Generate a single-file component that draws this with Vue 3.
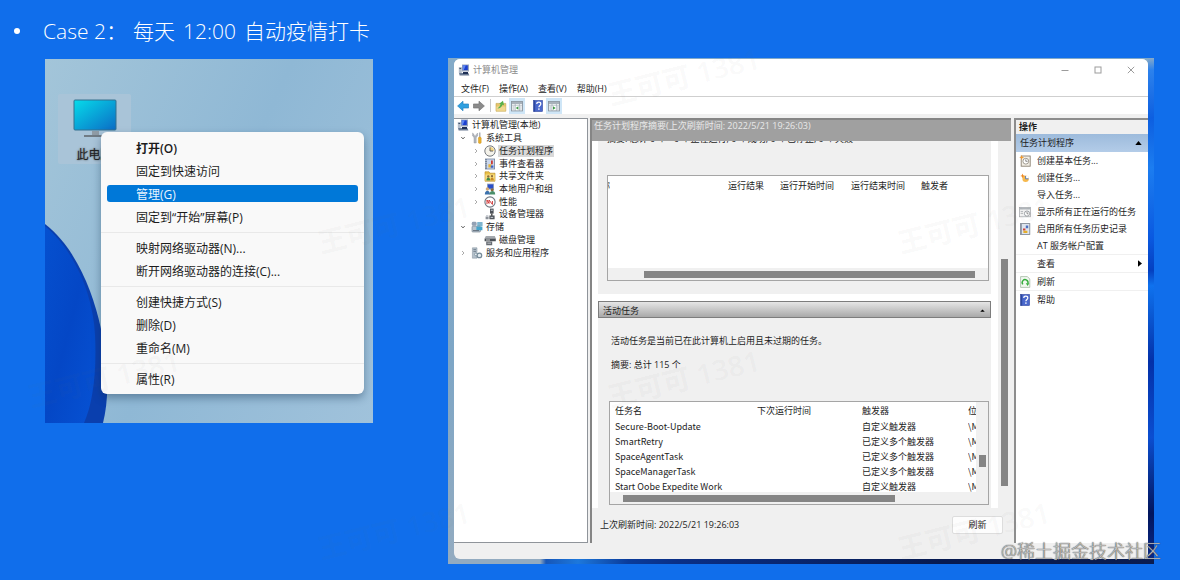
<script setup>
const icons = {
  computer: '<rect x="4" y="0.5" width="7" height="7" fill="#9aa6bd"/><rect x="4.8" y="1.3" width="5" height="4.8" fill="#1c3fd0"/><path d="M4.8 1.3h3l-2 4.8h-1z" fill="#5d86f0"/><rect x=".8" y="3" width="3" height="6" fill="#b4bdca"/><rect x="1.4" y="4" width="1.8" height="1" fill="#3f5068"/><path d="M1 9h9.4l1 2.5H1.6z" fill="#6b7b94"/><path d="M5 8h5v2H5z" fill="#1f2f55"/>',
  tools: '<path d="M1.6 1v3l1.4 1.4V11h2.2V5.4L6.6 4V1L5.3 2.4v1.4H3V2.4z" fill="#b4b9c0" stroke="#858b94" stroke-width=".4"/><path d="M8.2.6h1.2v5H8.2z" fill="#9a9ea5"/><rect x="7.4" y="5" width="2.8" height="6.4" rx="1.2" fill="#eab02c" stroke="#c48b1c" stroke-width=".4"/>',
  clock: '<circle cx="6" cy="6" r="5.2" fill="#f4f2ea" stroke="#777b80" stroke-width="1"/><path d="M6 6V2a4 4 0 0 1 4 4z" fill="#f3d78a"/><path d="M6 2.4V6h3" fill="none" stroke="#555" stroke-width=".9"/>',
  events: '<rect x="1" y=".6" width="10" height="10.8" fill="#75849c"/><rect x="3" y="1.4" width="7.2" height="9.2" fill="#cbd8ee"/><path d="M1.2 2.4h1.6M1.2 4.6h1.6M1.2 6.8h1.6M1.2 9h1.6" stroke="#e5e9ee" stroke-width=".7"/><path d="M4.4 6.2h3v3.4h-3z" fill="#e7b53a"/><path d="M7 2.4h1.8v3.8H7z" fill="#cc3a32"/><path d="M6.8 7.4h2.6v2.4H6.8z" fill="#3d62c4"/>',
  folder: '<path d="M1 1.8h4l1 1.4h5v8H1z" fill="#e9c04a" stroke="#b88a1c" stroke-width=".6"/><path d="M1.4 4.6h9.2v6.2H1.4z" fill="#f7dc80"/><circle cx="4.3" cy="6.4" r="1.2" fill="#8b6a3a"/><path d="M2.4 10.6c0-4 3.8-4 3.8 0z" fill="#3f8a4a"/><circle cx="8" cy="6.2" r="1.1" fill="#8b6a3a"/><path d="M6.3 10.6c0-4 3.6-4 3.6 0z" fill="#c88a25"/>',
  users: '<rect x="3" y=".6" width="7" height="6" fill="#9dabc2"/><rect x="3.8" y="1.4" width="5.4" height="4.2" fill="#2b4fc8"/><circle cx="3.4" cy="6" r="1.7" fill="#d3aa78"/><path d="M.8 11.4c0-5 5.2-5 5.2 0z" fill="#3d72ad"/><circle cx="8.2" cy="6.8" r="1.6" fill="#8a6a3e"/><path d="M5.6 11.4c0-4.4 5.6-4.4 5.6 0z" fill="#4a8f6a"/>',
  perf: '<circle cx="6" cy="6" r="5.1" fill="#fff" stroke="#707781" stroke-width="1.1"/><path d="M3 8V4l2 3.4V4l3.4 4.4V5" fill="none" stroke="#d03a3a" stroke-width="1"/>',
  device: '<rect x="6" y=".6" width="3.6" height="5" fill="#4c5158"/><rect x="6.8" y="1.6" width="2" height="1.4" fill="#aab1ba"/><path d="M7.8 5.6v2.4" stroke="#444" stroke-width="1.4"/><path d="M5.4 7.6h5.2v3.6H5.4z" fill="#51565d"/><path d="M1.6 8.4h3v2.8h-3z" fill="#8b9199"/><path d="M2 7.6h2.4M6.6 9.4h2.6" stroke="#c7ccd2" stroke-width="1"/>',
  storage: '<rect x=".8" y=".8" width="4.8" height="4" rx="1.4" fill="#93a1b4"/><rect x="6.2" y="1" width="5.4" height="4" rx=".6" fill="#7fb5cf"/><rect x="1" y="5.2" width="8.4" height="5.8" rx=".8" fill="#b8c4cf" stroke="#697887" stroke-width=".6"/><path d="M5.4 5.6h6v3.6h-6z" fill="#45a5cc"/><path d="M2 9.6h6" stroke="#4e5966" stroke-width=".8"/>',
  disk: '<path d="M1.8 2h9l1 2.6H.6z" fill="#a4a8ad"/><path d="M.6 4.6h11.2v2.6H.6z" fill="#4b5056"/><path d="M2 6h4" stroke="#e2e5e8" stroke-width=".9"/><path d="M2.2 7.6h6v3.6h-6z" fill="#676c72"/><path d="M3.4 9.2h3.6" stroke="#c8cdd2" stroke-width=".9"/>',
  services: '<path d="M1.4.8h4.6v10.4H1.4z" fill="#b4c0cb" stroke="#7f8c99" stroke-width=".5"/><path d="M2.4 2.6h2.6M2.4 4.4h2.6" stroke="#5a6876" stroke-width=".7"/><circle cx="8.4" cy="8.4" r="2.3" fill="#e5edf2" stroke="#748997" stroke-width="1.2"/><circle cx="4.8" cy="7.4" r="1.3" fill="#e7edf2" stroke="#748997" stroke-width=".7"/>',
  back: '<path d="M.6 6L6 1.2V4h5.6v4H6v2.8z" fill="#2fa0e0" stroke="#2783bf" stroke-width=".7"/>',
  forward: '<path d="M11.4 6L6 1.2V4H.4v4H6v2.8z" fill="#8b8b8b" stroke="#777" stroke-width=".7"/>',
  up: '<path d="M1 3.4h9.8v7.8H1z" fill="#e4c66c" stroke="#c4a24a" stroke-width=".6"/><path d="M1.4 6.4h9v4.4h-9z" fill="#f0d890"/><path d="M2.4 8.4C4 7.4 5 6 5.6 4.2L4.2 3.8 8 .8l1 4.4-1.5-.5C6.6 7 5 8.4 2.4 8.4z" fill="#57b04a"/>',
  paneL: '<rect x=".5" y="1.5" width="11" height="9.4" fill="#fff" stroke="#8b959f" stroke-width=".9"/><path d="M.5 2.2h11v1.6H.5z" fill="#8b97a3"/><path d="M4.2 4v7M8.4 4v7M.8 5.2h10.4" stroke="#9ba6b0" stroke-width=".7"/><path d="M1.4 7h2M1.4 9h2M9.2 7h1.4M9.2 9h1.4" stroke="#83919e" stroke-width=".7"/><path d="M4.8 8l2.6-1.8v3.6z" fill="#3c9b45"/>',
  paneR: '<rect x=".5" y="1.5" width="11" height="9.4" fill="#fff" stroke="#8b959f" stroke-width=".9"/><path d="M.5 2.2h11v1.6H.5z" fill="#8b97a3"/><path d="M4 4v7M8.4 4v7M.8 5.2h10.4" stroke="#9ba6b0" stroke-width=".7"/><path d="M1.4 7h2M1.4 9h2M9 7h1.8M9 9h1.8" stroke="#83919e" stroke-width=".7"/><path d="M7.6 8L5 6.2v3.6z" fill="#3c9b45"/>',
  help: '<rect x="1.6" y=".4" width="9" height="11.2" fill="#4a68cc" stroke="#2a3f94" stroke-width=".5"/><path d="M1.6.4h1.6v11.2H1.6z" fill="#2d479f"/><path d="M4.8 4c0-2.4 4-2.4 4 0 0 1.5-1.9 1.5-1.9 3.2" fill="none" stroke="#fff" stroke-width="1.2"/><rect x="6.2" y="8.4" width="1.4" height="1.4" fill="#fff"/>',
  taskBasic: '<rect x="2.2" y="1" width="9" height="10.2" fill="#f3efe6" stroke="#8a8174" stroke-width=".9"/><circle cx="6.8" cy="6.2" r="2.9" fill="#fff" stroke="#8a8478" stroke-width=".8"/><path d="M6.8 4.4v1.9h1.8" fill="none" stroke="#555" stroke-width=".7"/><path d="M2.6 0l.8 1.7 1.8.7-1.8.7-.8 1.9-.7-1.9-1.7-.7 1.7-.7z" fill="#f29a2e"/>',
  task: '<circle cx="6.6" cy="6.8" r="3.2" fill="#f6b94e"/><path d="M6.6 6.8V3.6a3.2 3.2 0 0 1 3.2 3.2z" fill="#fff"/><path d="M6.6 4v2.8h3" fill="none" stroke="#4c72b0" stroke-width=".9"/><path d="M3.6 1.6l.7 1.6 1.6.7-1.6.7-.7 1.6-.7-1.6-1.6-.7 1.6-.7z" fill="#f08a24"/>',
  running: '<rect x=".5" y="1.4" width="11" height="9.4" fill="#f4f4f4" stroke="#9da0a4" stroke-width=".7"/><path d="M.6 1.6h10.8v2H.6z" fill="#b0b5ba"/><path d="M1.6 5.6h2.4M1.6 7.4h2.4" stroke="#9a9ea3" stroke-width=".7"/><circle cx="8" cy="7.6" r="2.6" fill="#fff" stroke="#8a8e93" stroke-width=".8"/><path d="M8 6v1.8h1.4" fill="none" stroke="#666" stroke-width=".7"/>',
  history: '<rect x="1.4" y=".6" width="9.4" height="10.8" fill="#dde4ee" stroke="#77808c" stroke-width=".8"/><path d="M2.4.8v10.4" stroke="#8e98a5" stroke-width="1"/><path d="M6.8 2.4h2.4v2.8H6.8z" fill="#4c6fc0"/><path d="M4 5.4h2.4v2.2H4z" fill="#cf4038"/><path d="M4.4 7.8h4v2.2h-4z" fill="#e4ae2b"/>',
  refresh: '<path d="M1.6.6h6.8l2.4 2.4v8.4H1.6z" fill="#f1f8f0" stroke="#9ab09a" stroke-width=".7"/><path d="M3.9 8.4A2.9 2.9 0 1 1 8.8 7.6" fill="none" stroke="#35ad3c" stroke-width="1.4"/><path d="M6.8 7.2h3.6L8.6 10z" fill="#35ad3c"/>'
}
const contextMenu = [
  ['打开(O)', '固定到快速访问', '管理(G)', '固定到“开始”屏幕(P)'],
  ['映射网络驱动器(N)...', '断开网络驱动器的连接(C)...'],
  ['创建快捷方式(S)', '删除(D)', '重命名(M)'],
  ['属性(R)']
]
const menus = ['文件(F)', '操作(A)', '查看(V)', '帮助(H)']
const tree = [
  { t: '计算机管理(本地)', i: 'computer', l: 0 },
  { t: '系统工具', i: 'tools', l: 1, a: 'open' },
  { t: '任务计划程序', i: 'clock', l: 2, a: 'shut', sel: true },
  { t: '事件查看器', i: 'events', l: 2, a: 'shut' },
  { t: '共享文件夹', i: 'folder', l: 2, a: 'shut' },
  { t: '本地用户和组', i: 'users', l: 2, a: 'shut' },
  { t: '性能', i: 'perf', l: 2, a: 'shut' },
  { t: '设备管理器', i: 'device', l: 2 },
  { t: '存储', i: 'storage', l: 1, a: 'open' },
  { t: '磁盘管理', i: 'disk', l: 2 },
  { t: '服务和应用程序', i: 'services', l: 1, a: 'shut' }
]
const tasks = [
  ['Secure-Boot-Update', '自定义触发器'],
  ['SmartRetry', '已定义多个触发器'],
  ['SpaceAgentTask', '已定义多个触发器'],
  ['SpaceManagerTask', '已定义多个触发器'],
  ['Start Oobe Expedite Work', '自定义触发器']
]
const actions = [
  { t: '创建基本任务...', i: 'taskBasic' },
  { t: '创建任务...', i: 'task' },
  { t: '导入任务...' },
  { t: '显示所有正在运行的任务', i: 'running' },
  { t: '启用所有任务历史记录', i: 'history' },
  { t: 'AT 服务帐户配置' },
  { t: '查看', sub: true, line: true },
  { t: '刷新', i: 'refresh', line: true },
  { t: '帮助', i: 'help', line: true }
]
</script>

<template>
  <main class="slide">
    <h1 class="title"><span class="bullet"></span><span class="case">Case 2：</span><span class="when"><span>每天</span> <span>12:00</span> <span>自动疫情打卡</span></span></h1>

    <div class="shots">
      <section class="desktop">
        <svg class="bloom" viewBox="0 0 328 364" preserveAspectRatio="xMinYMin slice" aria-hidden="true">
          <defs>
            <linearGradient id="petal" x1="0" y1="0" x2="1" y2="1">
              <stop offset="0" stop-color="#0550cf" /><stop offset=".5" stop-color="#0447c6" /><stop offset="1" stop-color="#0652d4" />
            </linearGradient>
          </defs>
          <path d="M0 165C30 188 48 232 56 270C64 310 64 340 58 364H0Z" fill="#0a3fae" />
          <path d="M0 167C30 192 48 236 50 276C52 316 47 346 39 364H0Z" fill="url(#petal)" />
        </svg>
        <div class="pc">
          <svg width="44" height="40" viewBox="0 0 44 40" aria-hidden="true">
            <defs>
              <linearGradient id="screen" x1="0" y1="0" x2="1" y2="1">
                <stop offset="0" stop-color="#06dcea" /><stop offset="1" stop-color="#0b6cc5" />
              </linearGradient>
            </defs>
            <rect x="1" y="1" width="42" height="30" rx="1" fill="url(#screen)" stroke="#34718f" />
            <path d="M19 32h7v5h-7z" fill="#8f9ba5" /><path d="M11 36h22v2H11z" fill="#707b84" />
          </svg>
          <span>此电脑</span>
        </div>
        <div class="context">
          <div v-for="(g, gi) in contextMenu" :key="gi" class="group">
            <button v-for="m in g" :key="m" type="button" :class="{ strong: m === '打开(O)', active: m === '管理(G)' }">{{ m }}</button>
          </div>
        </div>
      </section>

      <section class="backdrop">
        <div class="window">
          <header class="titlebar">
            <svg class="ico" viewBox="0 0 12 12" v-html="icons.computer"></svg>
            <span class="name">计算机管理</span>
            <button type="button" aria-label="最小化"><svg viewBox="0 0 8 8"><path d="M.5 4.5h7" /></svg></button>
            <button type="button" aria-label="最大化"><svg viewBox="0 0 8 8"><rect x="1" y="1" width="6" height="6" /></svg></button>
            <button type="button" aria-label="关闭"><svg viewBox="0 0 8 8"><path d="M.8.8l6.4 6.4M7.2.8L.8 7.2" /></svg></button>
          </header>
          <nav class="menubar"><button v-for="m in menus" :key="m" type="button">{{ m }}</button></nav>
          <div class="toolbar">
            <button type="button" aria-label="后退"><svg class="ico" viewBox="0 0 12 12" v-html="icons.back"></svg></button>
            <button type="button" aria-label="前进"><svg class="ico" viewBox="0 0 12 12" v-html="icons.forward"></svg></button>
            <i></i>
            <button type="button" aria-label="上移"><svg class="ico" viewBox="0 0 12 12" v-html="icons.up"></svg></button>
            <button type="button" class="on" aria-label="控制台树"><svg class="ico" viewBox="0 0 12 12" v-html="icons.paneL"></svg></button>
            <i class="blank"></i>
            <button type="button" aria-label="帮助"><svg class="ico" viewBox="0 0 12 12" v-html="icons.help"></svg></button>
            <button type="button" class="on" aria-label="操作窗格"><svg class="ico" viewBox="0 0 12 12" v-html="icons.paneR"></svg></button>
          </div>

          <div class="panes">
            <aside class="tree">
              <button v-for="n in tree" :key="n.t" type="button" :class="['node', 'l' + n.l]">
                <svg v-if="n.l" class="arrow" viewBox="0 0 6 6"><path v-if="n.a === 'open'" d="M1.4 2.2L3 3.8l1.6-1.6" stroke="#444" /><path v-if="n.a === 'shut'" d="M2 1l2 2-2 2" stroke="#aaa" /></svg>
                <svg class="ico" viewBox="0 0 12 12" v-html="icons[n.i]"></svg>
                <span :class="{ sel: n.sel }">{{ n.t }}</span>
              </button>
            </aside>

            <section class="center">
              <h2>任务计划程序摘要(上次刷新时间: 2022/5/21 19:26:03)</h2>
              <div class="view">
                <div class="content">
                  <div class="card status">
                    <p class="cut">摘要: 总计 0 个 - 0 个正在运行, 0 个成功, 0 个已停止, 0 个失败</p>
                    <div class="list">
                      <table>
                        <colgroup><col class="a1" /><col class="a2" /><col class="a3" /><col class="a4" /><col /></colgroup>
                        <thead><tr><th class="clip"><span>称</span></th><th>运行结果</th><th>运行开始时间</th><th>运行结束时间</th><th>触发者</th></tr></thead>
                      </table>
                      <div class="hbar first"><span></span></div>
                    </div>
                  </div>
                  <button class="fold" type="button">活动任务<svg viewBox="0 0 6 4"><path d="M0 3.5L3 .5l3 3z" /></svg></button>
                  <div class="card active">
                    <p>活动任务是当前已在此计算机上启用且未过期的任务。</p>
                    <p>摘要: 总计 115 个</p>
                    <div class="list second">
                      <div class="rows">
                        <table>
                          <colgroup><col class="b1" /><col class="b2" /><col class="b3" /><col /></colgroup>
                          <thead><tr><th>任务名</th><th>下次运行时间</th><th>触发器</th><th>位置</th></tr></thead>
                          <tbody><tr v-for="t in tasks" :key="t[0]"><td>{{ t[0] }}</td><td></td><td>{{ t[1] }}</td><td>\Microsoft</td></tr></tbody>
                        </table>
                        <div class="vbar"><span></span></div>
                      </div>
                      <div class="hbar next"><span></span></div>
                    </div>
                  </div>
                </div>
                <div class="scroll"><span></span></div>
              </div>
              <footer><span>上次刷新时间: 2022/5/21 19:26:03</span><button type="button">刷新</button></footer>
            </section>

            <aside class="actions">
              <h3>操作</h3>
              <button class="cat" type="button">任务计划程序<svg viewBox="0 0 8 5"><path d="M0 5l4-5 4 5z" /></svg></button>
              <button v-for="a in actions" :key="a.t" type="button" :class="['act', { line: a.line }]">
                <span class="slot"><svg v-if="a.i" class="ico" viewBox="0 0 12 12" v-html="icons[a.i]"></svg></span>
                <span class="label">{{ a.t }}</span>
                <svg v-if="a.sub" class="sub" viewBox="0 0 5 8"><path d="M0 0l5 4-5 4z" /></svg>
              </button>
            </aside>
          </div>
        </div>
      </section>
    </div>

    <div class="marks" aria-hidden="true">
      <span class="m1">王可可 1381</span><span class="m2">王可可 1381</span><span class="m3">王可可 1381</span>
      <span class="m4">王可可 1381</span><span class="m5">王可可 1381</span><span class="m6">王可可 1381</span><span class="m7">王可可 1381</span>
    </div>
    <div class="credit">@稀土掘金技术社区</div>
  </main>
</template>

<style>
body { background: #106eeb; }
</style>

<style scoped>
* { box-sizing: border-box; }
.slide { position: relative; min-height: 100vh; overflow: hidden; padding: 14px 26px 16px 14px; background: #106eeb; color: #1c1c1c; font-family: "Open Sans", "Noto Sans CJK SC", sans-serif; }
button { display: flex; align-items: center; margin: 0; padding: 0; border: 0; background: none; color: inherit; font: inherit; text-align: left; white-space: nowrap; }
h1, h2, h3, p { margin: 0; font-weight: 400; }
svg { flex: none; }
.title { display: flex; align-items: center; height: 34px; color: #fff; font-size: 21px; font-weight: 300; line-height: 34px; white-space: nowrap; }
.bullet { width: 6px; height: 6px; margin-right: 23px; border-radius: 50%; background: #fff; }
.case { width: 90px; }
.when { display: flex; gap: 8px; }
.shots { display: flex; align-items: flex-start; gap: 75px; margin: 10px 0 0 31px; }

.desktop { position: relative; flex: 0 0 328px; min-height: 364px; overflow: hidden; margin-top: 1px; background: linear-gradient(115deg, #a3c5d9, #8fb8d5 50%, #a0c2db); }
.bloom { position: absolute; inset: 0; width: 100%; height: 100%; }
.pc { position: absolute; left: 13px; top: 35px; display: flex; flex-direction: column; align-items: center; width: 73px; height: 70px; padding-top: 5px; background: #a9c4d8; border-radius: 2px; }
.pc span { margin-top: 8px; color: #222; font-size: 12px; line-height: 16px; text-shadow: 0 0 2px #444; }
.context { position: absolute; left: 56px; top: 73px; width: 263px; padding: 4px 0; border-radius: 6px; background: #f9f9f9; box-shadow: 0 4px 9px rgba(20, 50, 80, .4); font-size: 12px; }
.group { display: flex; flex-direction: column; }
.group + .group { margin-top: 4px; padding-top: 3px; border-top: 1px solid #e9e9e9; }
.group button { height: 17px; margin: 3px 6px; padding-left: 29px; border-radius: 3px; }
.group .strong { font-weight: 600; }
.group .active { background: #0078d8; color: #e8f4ff; }

.backdrop { flex: 1; min-width: 0; padding: 1px 6px 5px; background: linear-gradient(90deg, #93abc0 0 92px, #1656b8 98px, #1d78dc 130px, #0a3b9a 180px, #0a2f86 230px, #071a50 70%, #0a1c50) bottom / 100% 5px no-repeat, linear-gradient(180deg, #88aac8, #2d82ec 12px, #0d5fe0 60px, #1c7df0 110px, #0a59e0 180px, #0440c0 42%, #0f72ee 45%, #0330a8 60%, #0b4ed0 75%, #02155c 90%, #0a2c8c) right / 6px 100% no-repeat, linear-gradient(180deg, #83aac8, #7ea6c6 60%, #93abc0); }
.window { display: flex; flex-direction: column; min-height: 500px; overflow: hidden; border-radius: 6px; background: #f0f0f0; font-size: 9px; line-height: 12px; }
.ico { width: 12px; height: 12px; }
.titlebar { display: flex; align-items: center; height: 22px; padding: 0 13px 0 4px; background: #fff; color: #8a8a8a; }
.name { flex: 1; margin-left: 3px; }
.titlebar button { margin-left: 25px; }
.titlebar button svg { width: 8px; height: 8px; fill: none; stroke: #9c9c9c; stroke-width: 1; }
.menubar { display: flex; gap: 10px; height: 16px; padding-left: 7px; border-bottom: 1px solid #cfcfcf; background: #fff; }
.toolbar { display: flex; align-items: center; height: 17px; padding-left: 1px; background: #fff; }
.toolbar button { justify-content: center; width: 16px; height: 16px; }
.toolbar .on { background: #cfe6f7; }
.toolbar i { width: 1px; height: 13px; margin: 0 2px 0 3px; background: #c9c9c9; }
.toolbar .blank { background: none; margin: 0 2px; }
.panes { display: flex; flex: 1; gap: 3px; margin: 4px 0 16px; }

.tree { flex: 0 0 134px; display: grid; grid-template-rows: repeat(11, 1fr) 283px; border: 1px solid #8f949a; border-left: 0; background: #fff; }
.node { min-height: 0; padding-left: 3px; }
.node .ico { margin-right: 3px; }
.arrow { width: 6px; height: 6px; margin-right: 5px; fill: none; }
.l1 { padding-left: 6px; }
.l2 { padding-left: 19px; }
.sel { padding: 0 1px; margin-left: -1px; background: #d9d9d9; }

.center { flex: 1; min-width: 0; display: flex; flex-direction: column; margin-left: -1px; border-left: 2px solid #858585; }
.center h2 { height: 23px; padding: 0 2px; border-top: 2px solid #858585; background: #a0a0a0; color: #e9e9e9; font-size: 9px; line-height: 11px; white-space: nowrap; }
.view { display: flex; }
.content { flex: 1; min-width: 0; padding: 0 7px 0 6px; background: #fff; }
.card { background: #f0f0f0; }
.status { height: 153px; padding: 0 2px 0 9px; }
.cut { display: flex; align-items: flex-end; height: 2px; margin-bottom: 32px; overflow: hidden; line-height: 8px; white-space: nowrap; }
.list { display: flex; flex-direction: column; height: 106px; border: 1px solid #a5a5a5; background: #fff; }
table { flex: 1; width: 100%; min-width: 0; table-layout: fixed; border-collapse: collapse; }
th, td { height: 15px; padding: 0; overflow: hidden; font-weight: 400; text-align: left; white-space: nowrap; line-height: 12px; }
td { font-family: "Noto Sans CJK SC", sans-serif; }
.list > table { flex: none; }
.list > table th { height: 19px; }
.clip span { display: flex; justify-content: flex-end; width: 2px; overflow: hidden; }
.a1 { width: 120px; } .a2 { width: 52px; } .a3 { width: 71px; } .a4 { width: 70px; }
.hbar { display: flex; align-items: center; height: 12px; margin-top: auto; background: #f0f0f0; }
.hbar span { height: 7px; background: #858585; }
.first span { width: 87%; margin-left: 36px; }
.next span { width: 72%; margin-left: 13px; }
.fold { width: 100%; height: 17px; margin-top: 7px; padding: 2px 5px 0 4px; border: 1px solid #7d7d7d; background: linear-gradient(#e6e6e6, #a9a9a9); justify-content: space-between; }
.fold svg { width: 5px; height: 3px; }
.active.card { height: 190px; padding: 17px 2px 0 11px; }
.active p { height: 24px; padding-left: 2px; line-height: 12px; }
.active p + p { height: 42px; }
.second { height: 104px; }
.rows { display: flex; height: 90px; overflow: hidden; }
.rows table { margin-left: 5px; }
.rows thead th { height: 17px; }
.b1 { width: 142px; } .b2 { width: 105px; } .b3 { width: 106px; }
.vbar { flex: 0 0 12px; padding: 53px 2px 0 3px; background: #f0f0f0; }
.vbar span { display: block; height: 12px; background: #858585; }
.scroll { flex: 0 0 13px; padding: 118px 3px 0; background: #f0f0f0; }
.scroll span { display: block; height: 227px; background: #858585; }
.center footer { display: flex; align-items: center; justify-content: space-between; padding: 8px 8px 0; }
.center footer button { justify-content: center; width: 51px; height: 18px; border: 1px solid #ddd; border-radius: 2px; background: #fdfdfd; }

.actions { flex: 0 0 134px; border-left: 2px solid #8d8d8d; border-top: 2px solid #8d8d8d; background: #fff; }
.actions h3 { height: 14px; padding-left: 3px; background: #f0f0f0; font-size: 9px; font-weight: 700; line-height: 14px; }
.cat { justify-content: space-between; width: 100%; height: 18px; padding: 0 6px 0 4px; background: linear-gradient(#9dbbdc, #b3cce8); }
.cat svg { width: 7px; height: 4px; }
.act { width: 100%; height: 17px; padding: 0 6px 0 3px; }
.act.line { height: 18px; border-top: 1px solid #f0f0f0; }
.slot { display: flex; width: 18px; }
.label { flex: 1; }
.sub { width: 4px; height: 7px; }

.marks { position: absolute; inset: 0; overflow: hidden; pointer-events: none; color: rgba(110, 110, 110, .05); font-size: 28px; font-weight: 600; line-height: 36px; white-space: nowrap; }
.marks span { position: absolute; transform: rotate(-14deg); }
.m1 { left: 606px; top: 58px; } .m2 { left: 316px; top: 206px; } .m3 { left: 896px; top: 206px; }
.m4 { left: 26px; top: 360px; } .m5 { left: 606px; top: 360px; } .m6 { left: 316px; top: 512px; } .m7 { left: 896px; top: 512px; }
.credit { position: absolute; right: 19px; bottom: 17px; color: rgba(215, 215, 215, .85); font-size: 18px; font-weight: 300; line-height: 24px; text-shadow: 0 0 1px #444, 0 0 1px #555; }
</style>
